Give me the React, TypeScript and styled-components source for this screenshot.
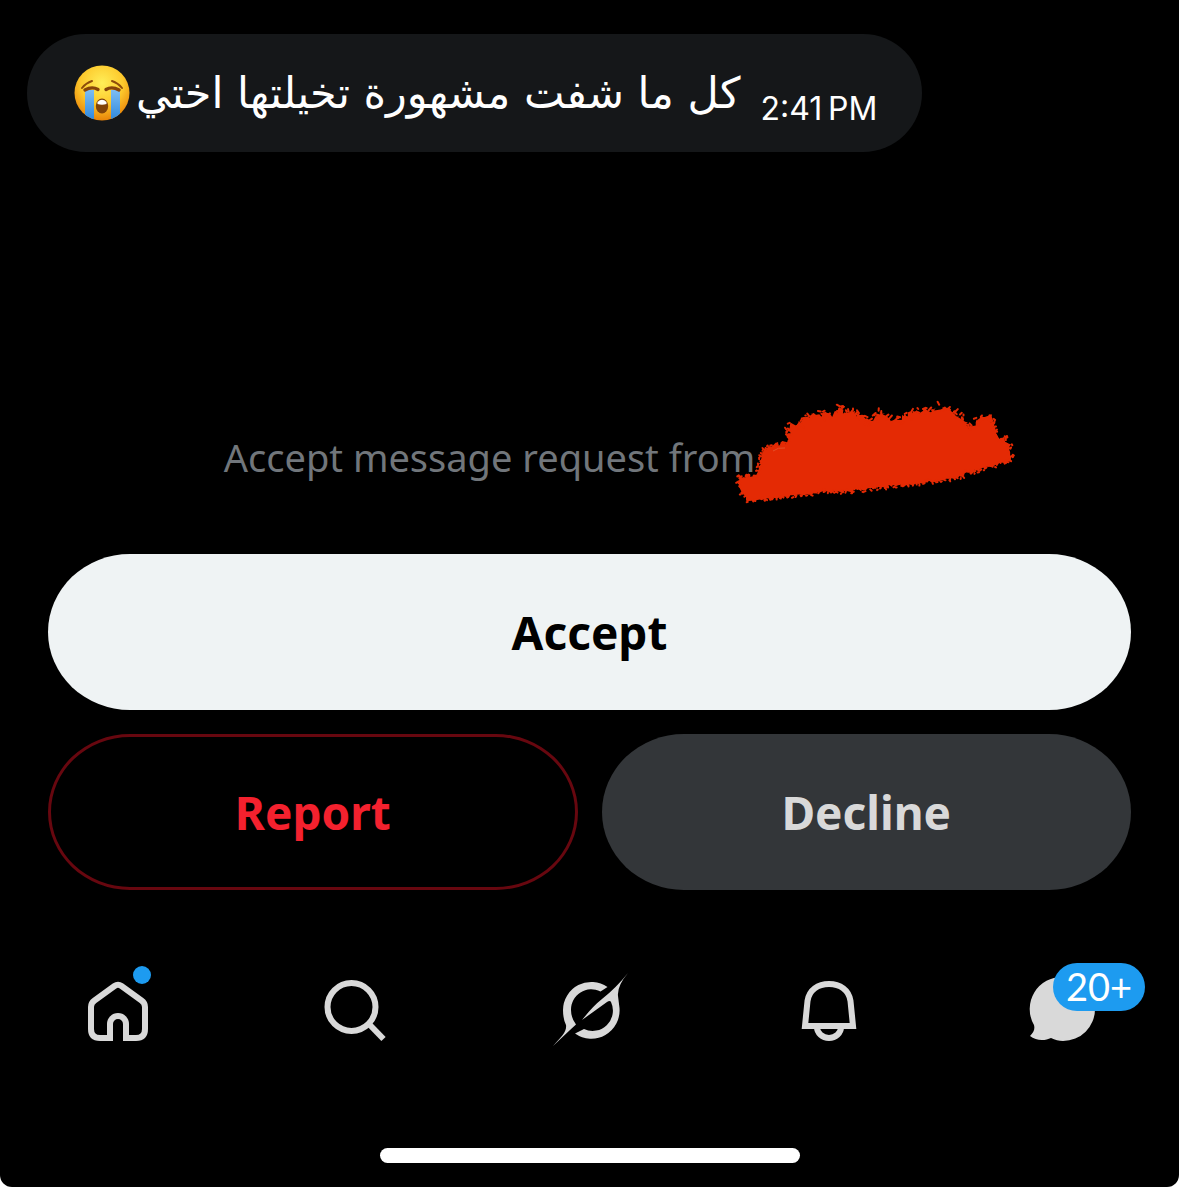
import React from "react";
import styled, { createGlobalStyle } from "styled-components";

const Global = createGlobalStyle`
  * { box-sizing: border-box; }
  html { background: #fff; }
  body { margin: 0; font-family: "Noto Sans", "Open Sans", sans-serif; }
  button { font-family: inherit; cursor: pointer; }
`;

const Screen = styled.div`
  display: flex;
  flex-direction: column;
  min-height: 100vh;
  background: #000;
  border-radius: 0 0 12px 12px;
  overflow: hidden;
`;

const Thread = styled.main`
  flex: 1;
  padding: 34px 27px 0;
`;

const Bubble = styled.article`
  display: flex;
  align-items: center;
  width: fit-content;
  min-height: 118px;
  padding: 0 45px 0 47px;
  border-radius: 59px;
  background: #151719;
  color: #fff;
`;

const Emoji = styled.svg`
  flex: none;
  width: 56px;
  height: 56px;
  margin-right: 6px;
`;

const Message = styled.p`
  margin: 0;
  font-family: "DejaVu Sans", sans-serif;
  font-size: 43px;
  line-height: 60px;
  white-space: nowrap;
`;

const Time = styled.time`
  margin: 32px 0 0 20px;
  font-family: Inter, sans-serif;
  font-size: 32px;
  line-height: 32px;
  white-space: nowrap;
`;

const Request = styled.section`
  padding: 0 48px;
`;

const Prompt = styled.div`
  display: flex;
  align-items: center;
  justify-content: center;
  height: 104px;
  margin-bottom: 48px;
`;

const PromptText = styled.p`
  margin: 0;
  padding-top: 6px;
  color: #71767b;
  font-size: 38px;
  line-height: 52px;
  white-space: nowrap;
`;

/* The mark spills past both ends of the name that it hides. */
const Scribble = styled.svg`
  flex: none;
  width: 284px;
  height: 104px;
  margin: 0 -62px 0 -22px;
  overflow: visible;
`;

const Actions = styled.div`
  display: grid;
  grid-template-columns: 1fr 1fr;
  gap: 24px;
`;

type Kind = "accept" | "report" | "decline";
const fills = { accept: "#eff3f4", report: "#000", decline: "#333639" };
const inks = { accept: "#000", report: "#f4212e", decline: "#d9d9d9" };

const Action = styled.button<{ $kind: Kind }>`
  grid-column: ${(p) => (p.$kind === "accept" ? "1 / -1" : "auto")};
  height: 156px;
  padding: 0;
  border: ${(p) => (p.$kind === "report" ? "3px solid #67070f" : "0")};
  border-radius: 82px / 78px;
  background: ${(p) => fills[p.$kind]};
  color: ${(p) => inks[p.$kind]};
  font-size: 46px;
  font-weight: 700;
  line-height: 60px;
`;

const Nav = styled.nav`
  display: grid;
  grid-template-columns: repeat(5, 1fr);
  margin-top: 70px;
`;

const Tab = styled.button`
  position: relative;
  display: flex;
  justify-content: center;
  padding: 0;
  border: 0;
  background: none;
  color: #d9d9d9;
`;

const Icon = styled.svg`
  width: 100px;
  height: 100px;
`;

const Dot = styled.span`
  position: absolute;
  top: 6px;
  left: calc(50% + 15px);
  width: 18px;
  height: 18px;
  border-radius: 50%;
  background: #1d9bf0;
`;

const Count = styled.span`
  position: absolute;
  top: 3px;
  left: calc(50% - 8px);
  width: 92px;
  height: 48px;
  border-radius: 24px;
  background: #1d9bf0;
  color: #fff;
  font-family: Lato, sans-serif;
  font-size: 38px;
  line-height: 46px;
  text-align: center;
`;

const HomeBar = styled.div`
  width: 420px;
  height: 15px;
  margin: 88px auto 24px;
  border-radius: 8px;
  background: #fff;
`;

/* Brush outline, broken up below into irregular teeth and loose bristle marks. */
const edge: [number, number][] = [
  [5, 80], [7, 74], [22, 74], [27, 64], [28, 50], [41, 42], [53, 42], [55, 30], [60, 22],
  [78, 13], [96, 13], [108, 8], [122, 11], [136, 18], [148, 12], [160, 17], [170, 15],
  [182, 9], [196, 10], [208, 6], [220, 9], [228, 17], [236, 24], [248, 15], [258, 17],
  [263, 30], [277, 43], [278, 58], [250, 67], [220, 76], [186, 82], [154, 84], [120, 89],
  [87, 90], [50, 96], [14, 100], [10, 92],
];

const drawBrush = () => {
  let seed = 17;
  const rand = () => {
    seed = (seed * 16807) % 2147483647;
    return seed / 2147483647 - 0.5;
  };
  const outline: string[] = [];
  const bristles: string[] = [];
  edge.forEach(([x, y], i) => {
    const [nx, ny] = edge[(i + 1) % edge.length];
    const steps = Math.max(2, Math.round(Math.hypot(nx - x, ny - y) / 2));
    const spread = y < 32 ? 6 : 3;
    for (let s = 0; s < steps; s++) {
      const t = s / steps;
      const px = x + (nx - x) * t + rand() * spread;
      const py = y + (ny - y) * t + rand() * spread;
      outline.push(`${px.toFixed(1)},${py.toFixed(1)}`);
      const bx = px + rand() * spread;
      const by = py + rand() * spread;
      bristles.push(
        `M${bx.toFixed(1)} ${by.toFixed(1)}l${(rand() * spread).toFixed(1)} ${(rand() * spread).toFixed(1)}`,
      );
    }
  });
  return { outline: outline.join(" "), bristles: bristles.join("") };
};

const brush = drawBrush();

const CryingFace = () => (
  <Emoji viewBox="0 0 56 56" role="img" aria-label="😭">
    <defs>
      <radialGradient id="face" cx="50%" cy="32%" r="70%">
        <stop offset="0" stopColor="#ffee58" />
        <stop offset="0.55" stopColor="#fdc92c" />
        <stop offset="1" stopColor="#e87f06" />
      </radialGradient>
      <linearGradient id="tear" x1="0" y1="0" x2="0" y2="1">
        <stop offset="0" stopColor="#7dbdf3" />
        <stop offset="1" stopColor="#2b86dc" />
      </linearGradient>
      <clipPath id="head"><circle cx="28" cy="28" r="27.5" /></clipPath>
    </defs>
    <circle cx="28" cy="28" r="27.5" fill="url(#face)" />
    <g clipPath="url(#head)">
      <path d="M11 25h9v31h-9zM37 25h9v31h-9z" fill="url(#tear)" />
    </g>
    <path d="M8 23q4-5 10-7M48 23q-4-5-10-7" fill="none" stroke="#8d4c0b" strokeWidth="2" strokeLinecap="round" />
    <path d="M11 25q7-4 13-0.500M45 25q-7-4-13-0.500" fill="none" stroke="#87450b" strokeWidth="3.400" strokeLinecap="round" />
    <ellipse cx="28" cy="41" rx="6.200" ry="7.500" fill="#804309" />
    <path d="M23.500 37q4.500-4.500 9 0v2q-4.500 1.500-9 0z" fill="#fff" />
  </Emoji>
);

export default function App() {
  return (
    <>
      <Global />
      <Screen>
        <Thread>
          <Bubble>
            <CryingFace />
            <Message dir="rtl" lang="ar">كل ما شفت مشهورة تخيلتها اختي</Message>
            <Time>2:41{"\u2009"}PM</Time>
          </Bubble>
        </Thread>
        <Request>
          <Prompt>
            <PromptText>Accept message request from</PromptText>
            <Scribble viewBox="0 0 284 104" aria-hidden="true">
              <polygon points={brush.outline} fill="#e42a04" />
              <path d={brush.bristles} fill="none" stroke="#e42a04" strokeWidth="2" strokeLinecap="round" />
              <path d="M40 49q5-4 12-3" fill="none" stroke="#e5502a" />
            </Scribble>
          </Prompt>
          <Actions>
            <Action $kind="accept">Accept</Action>
            <Action $kind="report">Report</Action>
            <Action $kind="decline">Decline</Action>
          </Actions>
        </Request>
        <Nav>
          <Tab aria-label="Home">
            <Icon viewBox="0 0 100 100" fill="none" stroke="currentColor" strokeWidth="6">
              <path d="M42 78H32q-9 0-9-9V47q0-4 3.500-6.500L46.500 26q3.500-2.500 7 0l20 14.500Q77 43 77 47v22q0 9-9 9H58V64a8 8 0 0 0-16 0z" />
            </Icon>
            <Dot />
          </Tab>
          <Tab aria-label="Search">
            <Icon viewBox="0 0 100 100" fill="none" stroke="currentColor" strokeWidth="6">
              <circle cx="47.500" cy="47" r="24" />
              <path d="M64 63l15.500 16" />
            </Icon>
          </Tab>
          <Tab aria-label="Grok">
            <Icon viewBox="0 0 100 100" fill="currentColor">
              <path d="M14 86C22 77 28 72 27 65Q24 59 24 50A28.300 28.300 0 0 1 68.500 27L61.500 31.500A20.300 20.300 0 0 0 32 50Q32 58 37 64.500L31 70z" />
              <path d="M89 13Q78 26 79 36L80.500 48A28.300 28.300 0 0 1 36 73.500L45 69A20.300 20.300 0 0 0 72 42Q71 40 68 42L43 60Q54 46 63 39Q77 28 89 13z" />
            </Icon>
          </Tab>
          <Tab aria-label="Notifications">
            <Icon viewBox="0 0 100 100" fill="none" stroke="currentColor" strokeWidth="6">
              <path d="M30 66l2.500-25C34 30 43 24 54 24s20 6 21.500 17L78 66z" />
              <path d="M42 67a12 11 0 0 0 24 0" />
            </Icon>
          </Tab>
          <Tab aria-label="Messages">
            <Icon viewBox="0 0 100 100" fill="currentColor">
              <path d="M52 17a32 32 0 0 1 0 64c-4 0-8-1-12-3-6 3-15 3-21-2 4-4 5-7 4-11A32 32 0 0 1 52 17z" />
            </Icon>
            <Count>20+</Count>
          </Tab>
        </Nav>
        <HomeBar />
      </Screen>
    </>
  );
}
